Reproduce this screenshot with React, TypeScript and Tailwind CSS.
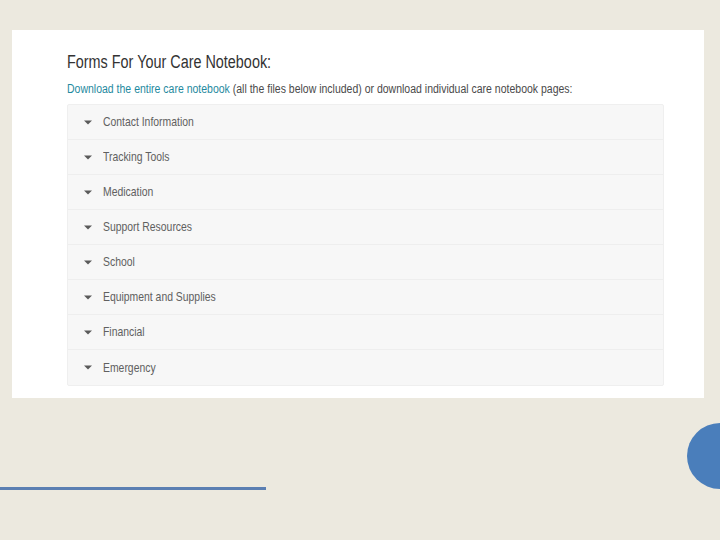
const items = [
  'Contact Information',
  'Tracking Tools',
  'Medication',
  'Support Resources',
  'School',
  'Equipment and Supplies',
  'Financial',
  'Emergency',
]

function Caret() {
  return (
    <svg width="8" height="5" viewBox="0 0 8 5" className="shrink-0">
      <path d="M0 0.5 H8 L4 4.5 Z" fill="#5a5a5a" />
    </svg>
  )
}

export default function App() {
  return (
    <div
      className="relative w-[720px] h-[540px] overflow-hidden bg-[#ece9df]"
      style={{ fontFamily: '"Liberation Sans", Arial, sans-serif' }}
    >
      <div className="pt-[30px] pl-[12px]">
        <div className="w-[692px] h-[368px] bg-white pt-[23px] pl-[55px]">
          {/* heading */}
          <h2 className="text-[18px] leading-[18px] text-[#333333] whitespace-nowrap">
            <span className="inline-block origin-left scale-x-[0.8]">Forms For Your Care Notebook:</span>
          </h2>
          <p className="mt-[12px] text-[12.5px] leading-[13px] text-[#4a4a4a] whitespace-nowrap">
            <span className="inline-block origin-left scale-x-[0.84]">
              <span className="text-[#1f8aa0]">Download the entire care notebook</span> (all the files below included) or download individual care notebook pages:
            </span>
          </p>
          {/* accordion */}
          <div className="mt-[8px] w-[597px] bg-[#f7f7f7] border border-[#efefef] rounded-[2px]">
            {items.map((label, i) => (
              <div
                key={label}
                className={`flex items-center gap-[11px] pl-[16px] h-[35px] ${i < items.length - 1 ? 'border-b border-[#eeeeee]' : ''}`}
              >
                <Caret />
                <span className="inline-block origin-left scale-x-[0.8] text-[13px] text-[#606060] whitespace-nowrap">{label}</span>
              </div>
            ))}
          </div>
        </div>
      </div>
      <div className="absolute left-0 top-[487px] w-[266px] h-[3px] bg-[#5b7fb2]" />
      <div className="absolute left-[687px] top-[423px] w-[66px] h-[66px] rounded-full bg-[#4a7ebb]" />
    </div>
  )
}
